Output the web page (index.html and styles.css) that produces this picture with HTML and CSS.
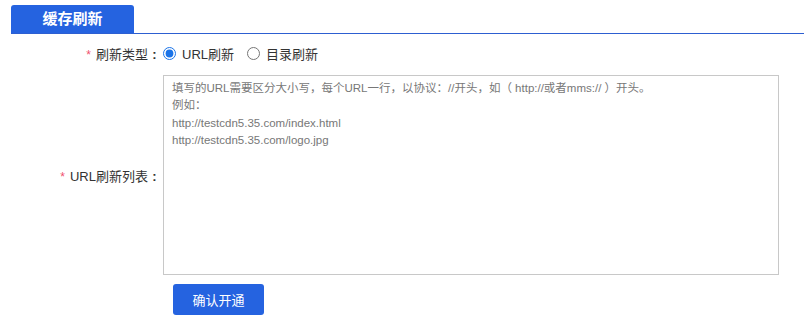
FILE: index.html
```html
<!DOCTYPE html>
<html lang="zh-CN">
<head>
  <meta charset="UTF-8">
  <title>缓存刷新</title>
  <link rel="stylesheet" href="styles.css">
</head>
<body>

  <div class="panel">
    <div class="tabs">
      <div class="tab">缓存刷新</div>
    </div>

    <form class="form">
      <div class="row">
        <label class="label"><span class="req">*</span>刷新类型<span class="colon">:</span></label>
        <div class="control radios">
          <label class="radio"><input type="radio" name="type" checked>URL刷新</label>
          <label class="radio"><input type="radio" name="type">目录刷新</label>
        </div>
      </div>

      <div class="row row-area">
        <label class="label"><span class="req">*</span>URL刷新列表<span class="colon">:</span></label>
        <div class="control">
          <textarea class="urls" placeholder="填写的URL需要区分大小写，每个URL一行，以协议：//开头，如（ http://或者mms:// ）开头。
例如：
http://testcdn5.35.com/index.html
http://testcdn5.35.com/logo.jpg"></textarea>
        </div>
      </div>

      <div class="actions">
        <button type="button" class="btn">确认开通</button>
      </div>
    </form>
  </div>

</body>
</html>
```

FILE: styles.css
```css
body {
  margin: 0;
  background: #fff;
  font-family: "Liberation Sans", "Noto Sans CJK SC", sans-serif;
  font-size: 13px;
  color: #333;
}

.panel {
  padding: 5px 0 0 11px;
}

.tabs {
  display: flex;
  border-bottom: 1px solid #2d5fd1;
}

.tab {
  width: 123px;
  height: 28px;
  line-height: 28px;
  text-align: center;
  background: #2563e0;
  color: #fff;
  font-weight: bold;
  font-size: 15px;
  border-radius: 3px 3px 0 0;
}

.row {
  display: flex;
  align-items: center;
}

.row:first-child {
  margin-top: 7px;
  height: 24px;
}

.row-area {
  margin-top: 10px;
}

.label {
  width: 150px;
  text-align: right;
  color: #333;
}

.colon {
  display: inline-block;
  width: 13px;
  text-align: center;
  font-weight: bold;
}

.req {
  color: #f0506e;
  font-size: 12px;
  margin-right: 5px;
}

.control {
  margin-left: 2px;
}

.radios {
  display: flex;
  gap: 13px;
}

.radio {
  display: flex;
  align-items: center;
}

.radio input {
  width: 13px;
  height: 13px;
  margin: 0 6px 0 0;
  accent-color: #1a73e8;
}

.urls {
  display: block;
  box-sizing: border-box;
  width: 616px;
  height: 200px;
  margin: 0;
  padding: 4px 8px;
  border: 1px solid #c8c8c8;
  font-family: "Liberation Sans", "Noto Sans CJK SC", sans-serif;
  font-size: 11.5px;
  line-height: 17.3px;
  resize: none;
  outline: none;
}

.urls::placeholder {
  color: #777;
}

.actions {
  margin: 9px 0 0 162px;
}

.btn {
  width: 91px;
  height: 31px;
  border: none;
  border-radius: 3px;
  background: #2563e0;
  color: #fff;
  font-family: "Liberation Sans", "Noto Sans CJK SC", sans-serif;
  font-size: 13px;
  cursor: pointer;
}
```
